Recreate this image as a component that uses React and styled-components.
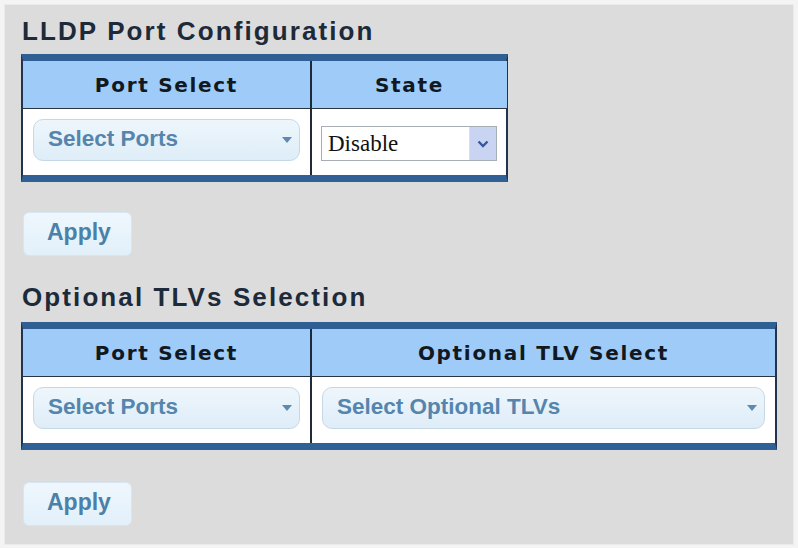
import styled, { createGlobalStyle } from 'styled-components';

const GlobalStyle = createGlobalStyle`
  html, body {
    margin: 0;
    padding: 0;
    background: #f4f4f4;
  }
  body {
    font-family: 'Liberation Sans', Arial, sans-serif;
  }
`;

const StyledPanel = styled.div`
  box-sizing: border-box;
  margin: 4px;
  width: 790px;
  height: 541px;
  background: #dddcdc;
  border: 1px solid #ebebeb;
  padding: 12px 0 0 16px;
  display: flex;
  flex-direction: column;
`;

const StyledTitle = styled.h2`
  margin: ${(p) => p.$top || 0}px 0 0 0;
  font-size: 26px;
  line-height: 28px;
  font-weight: 700;
  letter-spacing: 2.1px;
  color: #1c2a3a;
  padding-left: 1px;
`;

const StyledTable = styled.div`
  display: grid;
  grid-template-columns: ${(p) => p.$cols};
  width: ${(p) => p.$width}px;
  margin-top: ${(p) => p.$top}px;
  border-left: 2px solid #20344e;
  border-right: 2px solid #20344e;
  border-top: 7px solid #2f5f93;
  border-bottom: 7px solid #2f6196;
  box-sizing: border-box;
  background: #fff;
`;

const StyledHead = styled.div`
  height: 47px;
  background: #9fcbf8;
  border-bottom: 1px solid #2a3440;
  border-left: ${(p) => (p.$first ? 'none' : '2px solid #1e2a38')};
  display: flex;
  align-items: center;
  justify-content: center;
  font-family: 'DejaVu Sans', Verdana, sans-serif;
  font-size: 20px;
  font-weight: 700;
  letter-spacing: 1.7px;
  color: #121820;
`;

const StyledCell = styled.div`
  height: 66px;
  box-sizing: border-box;
  padding: ${(p) => (p.$plain ? '17px 10px 0 9px' : '10px 10px 0 10px')};
  border-left: ${(p) => (p.$first ? 'none' : '2px solid #1e2a38')};
`;

const StyledFancySelect = styled.div`
  box-sizing: border-box;
  height: 42px;
  border: 1px solid #c6d8e6;
  border-radius: 10px;
  background: linear-gradient(#eef6fc, #deedf8);
  display: flex;
  align-items: center;
  justify-content: space-between;
  padding: 0 7px 2px 14px;
  font-size: 22.5px;
  font-weight: 700;
  color: #5585ad;
`;

const StyledCaret = styled.span`
  width: 0;
  height: 0;
  margin-top: 2px;
  border-left: 5px solid transparent;
  border-right: 5px solid transparent;
  border-top: 6px solid #5f89b0;
`;

const StyledPlainSelect = styled.div`
  box-sizing: border-box;
  width: 176px;
  height: 35px;
  border: 1px solid #a8adb4;
  background: #fff;
  display: flex;
  align-items: center;
  justify-content: space-between;
  padding-left: 6px;
  font-family: 'Liberation Serif', 'Times New Roman', serif;
  font-size: 23px;
  color: #111;
`;

const StyledArrowBox = styled.span`
  width: 26px;
  height: 33px;
  background: #c9d4f2;
  border-left: 1px solid #d8dff4;
  display: flex;
  align-items: center;
  justify-content: center;
`;

const StyledButton = styled.button`
  box-sizing: border-box;
  width: 109px;
  height: 44px;
  margin: ${(p) => p.$top}px 0 0 2px;
  border: 1px solid #d6e6f2;
  border-radius: 6px;
  background: linear-gradient(#eef7fd, #e2f0fa);
  text-align: left;
  padding: 0 0 3px 23px;
  font-family: 'Liberation Sans', Arial, sans-serif;
  font-size: 23px;
  font-weight: 700;
  color: #4b80a9;
`;

const FancySelect = ({ label }) => (
  <StyledFancySelect>
    {label}
    <StyledCaret />
  </StyledFancySelect>
);

const PlainSelect = ({ value }) => (
  <StyledPlainSelect>
    {value}
    <StyledArrowBox>
      <svg width="12" height="8" viewBox="0 0 12 8">
        <path d="M1.5 1.5 L6 6 L10.5 1.5" fill="none" stroke="#34589a" strokeWidth="2.4" />
      </svg>
    </StyledArrowBox>
  </StyledPlainSelect>
);

const App = () => {
  return (
    <>
      <GlobalStyle />
      <StyledPanel>
        <StyledTitle>LLDP Port Configuration</StyledTitle>
        <StyledTable $cols="287px 1fr" $width={487} $top={9}>
          <StyledHead $first>Port Select</StyledHead>
          <StyledHead>State</StyledHead>
          <StyledCell $first>
            <FancySelect label="Select Ports" />
          </StyledCell>
          <StyledCell $plain>
            <PlainSelect value="Disable" />
          </StyledCell>
        </StyledTable>
        <StyledButton $top={30}>Apply</StyledButton>
        <StyledTitle $top={27}>Optional TLVs Selection</StyledTitle>
        <StyledTable $cols="287px 1fr" $width={756} $top={11}>
          <StyledHead $first>Port Select</StyledHead>
          <StyledHead>Optional TLV Select</StyledHead>
          <StyledCell $first>
            <FancySelect label="Select Ports" />
          </StyledCell>
          <StyledCell>
            <FancySelect label="Select Optional TLVs" />
          </StyledCell>
        </StyledTable>
        <StyledButton $top={32}>Apply</StyledButton>
      </StyledPanel>
    </>
  );
};

export default App;
